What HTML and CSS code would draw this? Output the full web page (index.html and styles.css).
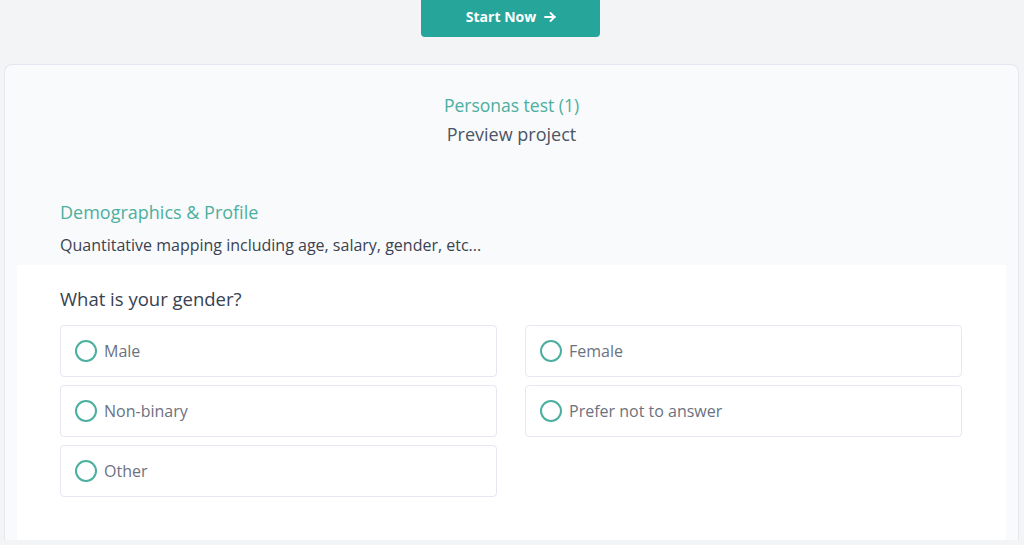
FILE: index.html
```html
<!DOCTYPE html>
<html lang="en">
<head>
	<meta charset="UTF-8">
	<title>Preview project</title>
	<link rel="stylesheet" href="styles.css">
</head>
<body>
	<div class="top">
		<a class="start" href="#">Start Now
			<svg class="arrow" width="12" height="10" viewBox="0 0 12 10"><path d="M1 5h10M6.5 1l4 4-4 4" fill="none" stroke="#fff" stroke-width="1.8" stroke-linecap="round" stroke-linejoin="round"/></svg>
		</a>
	</div>
	<div class="card">
		<div class="head">
			<div class="project">Personas test (1)</div>
			<div class="sub">Preview project</div>
		</div>
		<div class="section">
			<div class="section-title">Demographics &amp; Profile</div>
			<div class="section-desc">Quantitative mapping including age, salary, gender, etc...</div>
		</div>
		<div class="panel">
			<div class="question">What is your gender?</div>
			<ul class="options">
				<li><span class="radio"></span>Male</li>
				<li><span class="radio"></span>Female</li>
				<li><span class="radio"></span>Non-binary</li>
				<li><span class="radio"></span>Prefer not to answer</li>
				<li><span class="radio"></span>Other</li>
			</ul>
		</div>
	</div>
</body>
</html>
```
FILE: styles.css
```css
*{
	margin:0px;
	padding:0px;
	box-sizing:border-box;
}
ul li{
	list-style:none;
}
body{
	background:#f3f4f6;
	font-family:"Open Sans","Noto Sans",Arial,sans-serif;
	color:#374151;
}
.top{
	display:flex;
	justify-content:center;
	margin-bottom:27px;
}
.start{
	display:flex;
	align-items:center;
	justify-content:center;
	gap:8px;
	width:179px;
	height:37px;
	padding-bottom:5px;
	padding-left:1px;
	background:#26a69a;
	color:#fff;
	font-size:14px;
	font-weight:700;
	text-decoration:none;
	border-radius:0 0 4px 4px;
	margin-left:-3px;
}
.start .arrow{
	display:block;
	margin-top:1px;
}
.card{
	margin:0 5px 0 4px;
	background:#f9fafb;
	border:1px solid #e5e7f0;
	border-bottom:none;
	border-radius:8px 8px 0 0;
	padding:28px 12px 0;
}
.head{
	text-align:center;
}
.project{
	color:#4caf9f;
	font-size:17.5px;
	line-height:24px;
}
.sub{
	margin-top:3px;
	font-size:18px;
	line-height:28px;
	color:#4b5563;
}
.section{
	margin-top:51px;
	padding:0 43px;
}
.section-title{
	color:#4caf9f;
	font-size:18px;
	line-height:26px;
}
.section-desc{
	margin-top:9px;
	font-size:16px;
	line-height:22px;
	color:#3b4250;
}
.panel{
	margin-top:9px;
	background:#fff;
	padding:21px 44px 43px 43px;
}
.question{
	font-size:18.5px;
	line-height:26px;
	color:#374151;
}
.options{
	margin-top:13px;
	display:grid;
	grid-template-columns:1fr 1fr;
	gap:8px 28px;
}
.options li{
	display:flex;
	align-items:center;
	gap:7px;
	height:52px;
	padding-left:14px;
	border:1px solid #e6e7f0;
	border-radius:4px;
	font-size:16px;
	color:#6b7280;
}
.radio{
	width:22px;
	height:22px;
	border:2px solid #4caf9f;
	border-radius:50%;
}
```
